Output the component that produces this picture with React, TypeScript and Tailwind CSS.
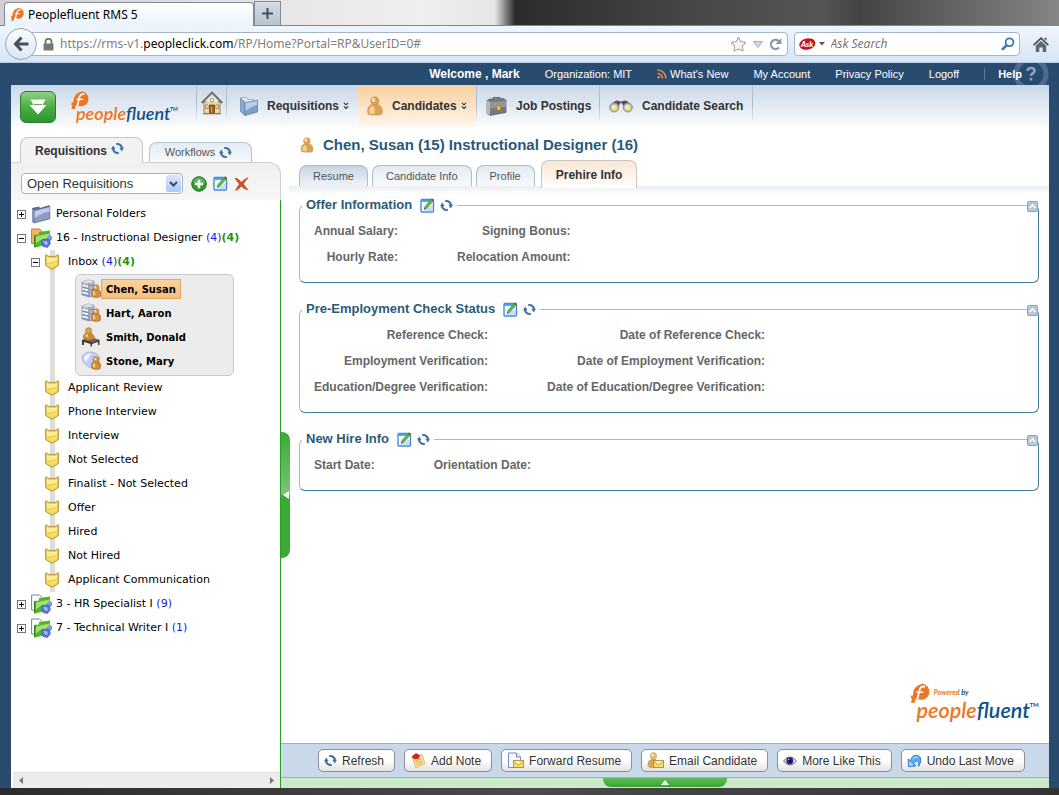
import React, { useState } from 'react';
import { Star } from 'lucide-react';

const arial = "font-['Liberation_Sans',Arial,sans-serif]";
const verdana = "font-['DejaVu_Sans',Verdana,sans-serif]";
const segoe = "font-['Noto_Sans','Segoe_UI',sans-serif]";

/* ---------- icons ---------- */

const RefreshIcon: React.FC = () => (
    <svg width="13" height="13" viewBox="0 0 13 13" fill="none" stroke="#44739f" strokeWidth="2.200" aria-hidden="true">
        <path d="M5.200 2.200A4.500 4.500 0 0 1 11 6.300M7.800 10.800A4.500 4.500 0 0 1 2 6.700" />
        <path d="M8.300 5.800H13l-2.200 3.600zM4.700 7.200H0l2.200-3.600z" fill="#44739f" stroke="none" />
    </svg>
);

const EditIcon: React.FC = () => (
    <svg width="15" height="15" viewBox="0 0 15 15" aria-hidden="true">
        <rect x="1" y="1.500" width="12.500" height="12.500" rx="1" fill="#f4f8ff" stroke="#3a86d0" strokeWidth="1.300" />
        <path d="M1 1.500h12.500v2.400H1z" fill="#4aa3e0" />
        <path d="M2 13.200h11V7z" fill="#cfd8f6" />
        <path d="M4.200 11.300L5 8.600l6-7 2 1.600-6.200 7z" fill="#5cbb46" stroke="#37892b" strokeWidth=".6" />
        <path d="M11 1.600l1-1.100 2.100 1.600-1.100 1.100z" fill="#c43a2c" />
        <path d="M4.200 11.300l.4-1.400 1 .8z" fill="#333" />
    </svg>
);

const AddIcon: React.FC = () => (
    <svg width="16" height="16" viewBox="0 0 16 16" aria-hidden="true">
        <circle cx="8" cy="8" r="7.300" fill="#2f9a2f" stroke="#1f7a24" />
        <path d="M2 7a6 5.400 0 0 1 12 0q-6 2-12 0z" fill="#6cc56a" opacity=".7" />
        <path d="M8 3.800v8.400M3.800 8h8.400" stroke="#fff" strokeWidth="2.600" />
    </svg>
);

const DeleteIcon: React.FC = () => (
    <svg width="15" height="14" viewBox="0 0 15 14" aria-hidden="true">
        <path d="M1 2Q4 1.500 7.300 5 10.500 1.500 14 1M14 12.400Q10.500 11.500 7.400 8 5 10.500 1.500 13.300" fill="none" stroke="none" />
        <path d="M1 1.200Q3.500 1 7.400 5.200 10.500 2 14 .8 11 4 9.300 7q2 3 4.700 5.800-3.600-.3-6.600-3.600Q5 11.800 1.600 13.600 3.200 9.800 5.400 7.200 3.200 4.200 1 1.200z" fill="#d1521f" stroke="#a5381a" strokeWidth=".6" />
    </svg>
);

const PersonIcon: React.FC<{ size?: number }> = ({ size = 20 }) => (
    <svg width={size} height={size} viewBox="0 0 20 20" aria-hidden="true">
        <ellipse cx="10" cy="18" rx="8" ry="1.800" fill="#c9c2b8" opacity=".6" />
        <path d="M2.500 15.500Q2.500 9.500 7.500 8.500h4.500q5.500 1 5.500 7 0 3.700-4.500 3-1.800.9-3.500 0-7 1-7-3z" fill="#dba24e" stroke="#c08c42" strokeWidth=".5" />
        <path d="M4 15q.3-4 4-5.500l2 4-.5 4.500q-5.500.5-5.500-3z" fill="#f3cf92" />
        <circle cx="9.800" cy="5" r="4.200" fill="#dba24e" stroke="#c08c42" strokeWidth=".5" />
        <circle cx="8.600" cy="3.900" r="1.900" fill="#fae3b6" />
    </svg>
);

const FolderIcon: React.FC = () => (
    <svg width="20" height="20" viewBox="0 0 20 20" aria-hidden="true">
        <path d="M1 4l7-1.500 1 1.500 9.500-3v14L2 19z" fill="#5c6c98" />
        <path d="M1 5l2 1v13l-2-1z" fill="#8f9cc0" />
        <path d="M3.200 6.500l15.600-4v12.200L3.200 19z" fill="#8e9cc4" stroke="#5b6a93" strokeWidth=".7" />
        <path d="M3.600 7l14.800-3.800v4.600Q10 9 3.600 14z" fill="#c3cce4" />
    </svg>
);

const BlueFolderIcon: React.FC = () => (
    <svg width="20" height="20" viewBox="0 0 20 20" aria-hidden="true">
        <path d="M2.500 1.500h5l1 2h6V16h-12z" fill="#e9f0f8" stroke="#8aa0bd" strokeWidth=".8" />
        <path d="M1.500 2L6 6v13.500l-4.500-4z" fill="#8ba9cc" stroke="#5b7ba3" strokeWidth=".6" />
        <path d="M6 6.500l12.500-2.200V16L6 19.500z" fill="#7f9fc6" stroke="#5b7ba3" strokeWidth=".7" />
        <path d="M6.500 7l11.500-2v4q-6 1-11.500 6z" fill="#b9cee6" />
    </svg>
);

const ReqFolderIcon: React.FC<{ open?: boolean }> = ({ open }) => (
    <svg width="21" height="20" viewBox="0 0 21 20" aria-hidden="true">
        {open
            ? <path d="M.6 1h8l3 3v11.500H.6z" fill="#f5b567" stroke="#cc7a2a" />
            : <path d="M.6 1h8l3 3v12H.6z" fill="#fff" stroke="#6d83b8" />}
        <path d="M3 7l5-.5V4l11-1.500V16L4 19.500z" fill="#54b428" />
        <path d="M5 8.500l13.500-3V11Q10 10 4.500 16z" fill="#a4e070" />
        <path d="M3 7v12.500l1.500-.5V8z" fill="#2f8a1a" />
        <path d="M19.500 7.500l-4.500 4q-5-1-4.500 2l1.500 5 4.500 1 3-4-1-2.500 2.500-2.500z" fill="#5577d6" stroke="#3550a8" strokeWidth=".6" />
        <path d="M12 13.500l3.500-.5 1.500 2.500-2 1.800z" fill="#a6bcff" />
        <circle cx="18.800" cy="9.600" r="2" fill="#7f9bea" />
    </svg>
);

const ShieldIcon: React.FC = () => (
    <svg width="14" height="16" viewBox="0 0 14 16" aria-hidden="true">
        <path d="M.6.800L4 2.400h6L13.400.800v10.700L7 15.400.600 11.500z" fill="#efcf4c" stroke="#b89a3c" />
        <path d="M2 2.800L4 4h6l2-1v3.500L2 9z" fill="#fbeb9c" />
        <path d="M2 11l10-3.500v3L7 13.800z" fill="#f6df6d" />
    </svg>
);

const MiniPerson: React.FC = () => (
    <g>
        <path d="M10.500 15q0-4.500 3-4.500h3q3.300.5 3.300 5 0 3-3 2.700-1.500.8-3 0-3.300.3-3.300-3.200z" fill="#d2913a" stroke="#94601c" strokeWidth=".6" />
        <circle cx="15" cy="8.600" r="2.900" fill="#dba04c" stroke="#94601c" strokeWidth=".6" />
        <path d="M11.800 15q.2-2.800 2-3.300l.5 4.500q-2.500.5-2.500-1.200z" fill="#f7d596" />
        <circle cx="14.200" cy="7.800" r="1.100" fill="#fae0ac" />
    </g>
);

type CandidateKind = 'database' | 'desk' | 'web';

const CandidateIcon: React.FC<{ kind: CandidateKind }> = ({ kind }) => (
    <svg width="20" height="20" viewBox="0 0 20 20" aria-hidden="true" className="shrink-0">
        {kind === 'database' && (
            <g>
                <path d="M1 3l6-2 6 1v15l-5 1-7-2z" fill="#b4bccd" stroke="#858da0" strokeWidth=".7" />
                <path d="M1 3l6-2 6 1-5 2z" fill="#e3e6ee" />
                <path d="M1.500 6.500l6 1.500M1.500 10l6 1.500M1.500 13.500l6 1.500" stroke="#fff" strokeWidth="1.400" />
                <path d="M1.500 8l6 1.500M1.500 11.500l6 1.500M1.500 15l6 1.500M9 7l4-1M9 11l4-1" stroke="#6d80b2" />
                <path d="M8 4v14" stroke="#78829b" />
                <MiniPerson />
            </g>
        )}
        {kind === 'desk' && (
            <g>
                <path d="M1 13l8-3 9.500 3v5h-1.500v-3l-6 2v2.500H9.500V17L3 15v3H1z" fill="#453c38" />
                <path d="M1.500 12.500l7-2.500 9.500 3-6 2.500z" fill="#71635a" />
                <path d="M2.500 9q1-3 4-3.500h3q2.500 1 4.500 6.500l-6 1.500Q2 13 2.500 9z" fill="#cd8b34" stroke="#8f5c1c" strokeWidth=".6" />
                <circle cx="7.500" cy="3.700" r="3" fill="#dfa550" stroke="#8f5c1c" strokeWidth=".6" />
                <path d="M4 9q.5-2 2.500-2.500l1 4z" fill="#f5cf8c" />
            </g>
        )}
        {kind === 'web' && (
            <g>
                <path d="M1 6q3-5.500 9-5 7 .5 8.500 6 0 6-5 9.500-6 1.500-10-4Q.5 9 1 6z" fill="#c4cbf7" stroke="#a3a9dc" strokeWidth=".7" />
                <path d="M3 6q3-4 7-3.500L5 11Q2.500 9 3 6z" fill="#f3f5ff" />
                <MiniPerson />
            </g>
        )}
    </svg>
);

const HouseIcon: React.FC = () => (
    <svg width="22" height="24" viewBox="0 0 22 24" aria-hidden="true">
        <path d="M3 11h16v11.500H3z" fill="#f1d9a4" stroke="#8b6f45" strokeWidth=".8" />
        <path d="M5 11.500L11 5l6 6.500z" fill="#fbf0d2" />
        <path d="M.7 12L11 1.500 21.300 12" fill="none" stroke="#6d6a69" strokeWidth="1.800" />
        <circle cx="11" cy="9" r="1.800" fill="#fff" stroke="#907445" strokeWidth=".8" />
        <path d="M8.500 14h5v8.500h-5z" fill="#9c6424" stroke="#6c4316" strokeWidth=".8" />
        <path d="M4.500 14h2.500v3.500H4.500zM15 14h2.500v3.500H15z" fill="#fff" stroke="#8b6f45" strokeWidth=".8" />
        <path d="M2 22.800h18" stroke="#87705a" />
        <path d="M10.500 16v5" stroke="#e2ab5c" />
    </svg>
);

const BriefcaseIcon: React.FC = () => (
    <svg width="21" height="20" viewBox="0 0 21 20" aria-hidden="true">
        <path d="M7.500 3.500V1.500h6v2" fill="none" stroke="#666" strokeWidth="1.200" />
        <path d="M1 4.500L3.500 3 18 2.500l2 2v12L4 19.500l-3-2z" fill="#77787a" stroke="#5d5e60" strokeWidth=".7" />
        <path d="M1 4.500l3 1.500v13.500l-3-2z" fill="#b5b7b9" />
        <path d="M4 6l16-1v6L4 12.500z" fill="#929496" />
        <rect x="11" y="10" width="3.500" height="4" rx=".8" fill="#f2cf35" stroke="#a5862a" strokeWidth=".7" />
    </svg>
);

const BinocularsIcon: React.FC = () => (
    <svg width="24" height="14" viewBox="0 0 24 14" aria-hidden="true">
        <path d="M3 5Q5 1.500 9 1.500l2 1h2l2-1q4.500 0 6 4l-6 2-2.500-3.500h-1L9 8z" fill="#66485a" />
        <circle cx="5.200" cy="8.500" r="4.500" fill="#b4c0b2" stroke="#7c868c" strokeWidth=".9" />
        <circle cx="18.800" cy="8.500" r="4.500" fill="#b4c0b2" stroke="#7c868c" strokeWidth=".9" />
        <circle cx="5.200" cy="8.700" r="2.900" fill="#f1e36c" />
        <circle cx="18.800" cy="8.700" r="2.900" fill="#f1e36c" />
        <circle cx="4.500" cy="7.800" r="1.200" fill="#fff" />
        <circle cx="18" cy="7.800" r="1.200" fill="#fff" />
    </svg>
);

const Chevrons: React.FC = () => (
    <svg width="6" height="8" viewBox="0 0 7 9" fill="none" stroke="#333" strokeWidth="1.300" aria-hidden="true">
        <path d="M1 .8l2.500 2.300L6 .8M1 5l2.500 2.300L6 5" />
    </svg>
);

const FluentMark: React.FC = () => (
    <g>
        <path d="M11.500.600a7.300 7.300 0 1 1-3.500 13.800Q6 13 5.500 15.500L4.800 18H1.500l.8-3.800-1.100-.5.5-2.200 1.600-.2Q3 3 11.500.600z" fill="#ee7623" />
        <path d="M14.500 3.300q-4-1-5 2.700L7.300 15" fill="none" stroke="#fff" strokeWidth="1.700" />
        <path d="M6.500 8.300h6.300" stroke="#fff" strokeWidth="1.400" />
    </g>
);

const Logo: React.FC<{ powered?: boolean }> = ({ powered }) => (
    <svg width={powered ? 132 : 110} height={powered ? 46 : 38} viewBox={powered ? '-2 0 110 38' : '0 0 110 38'} overflow="visible" role="img" aria-label="peoplefluent">
        <g transform={powered ? 'scale(.9)' : undefined}><FluentMark /></g>
        <text x="6" y="29" fontFamily="Lato, sans-serif" fontStyle="italic" fontWeight="600" fontSize="18">
            <tspan fill="#ee7623">people</tspan>
            <tspan fill="#0f4f8b">fluent</tspan>
        </text>
        <text x="100" y="20" fontFamily="Lato, sans-serif" fontWeight="700" fontSize="5" fill="#0f4f8b">TM</text>
        {powered && (
            <text x="20" y="10" fontFamily="Lato, sans-serif" fontStyle="italic" fontWeight="700" fontSize="6">
                <tspan fill="#ee7623">Powered </tspan>
                <tspan fill="#0f4f8b">by</tspan>
            </text>
        )}
    </svg>
);

const NoteIcon: React.FC = () => (
    <svg width="16" height="16" viewBox="0 0 16 16" aria-hidden="true">
        <path d="M2 4l10-2.500 3 9L6 15z" fill="#fbe698" stroke="#d0b05c" strokeWidth=".8" />
        <path d="M5 8l6.500-2M5.800 10l6.500-2M6.500 12l6-2" stroke="#c6a152" strokeWidth=".8" />
        <path d="M2 3.500L6 .5l3.500 2-1 3-4 .5z" fill="#d8251c" stroke="#961410" strokeWidth=".6" />
    </svg>
);

const Envelope: React.FC = () => (
    <g>
        <rect x="6.500" y="8.500" width="10" height="7" fill="#f7dc68" stroke="#b18f28" strokeWidth=".9" />
        <path d="M6.500 9l5 4 5-4" fill="#fff3b5" stroke="#b18f28" strokeWidth=".8" />
    </g>
);

const ForwardIcon: React.FC = () => (
    <svg width="17" height="17" viewBox="0 0 17 17" aria-hidden="true">
        <path d="M1.500 1h8l4 4v10.500h-12z" fill="#f5f9ff" stroke="#7390c0" />
        <path d="M9.500 1v4h4" fill="#dde8fa" stroke="#7390c0" />
        <Envelope />
    </svg>
);

const EmailIcon: React.FC = () => (
    <svg width="17" height="17" viewBox="0 0 17 17" aria-hidden="true">
        <path d="M.8 13Q1 8 5 7h3q3 1 3 6 0 3-5 2.600-5 .5-5.200-2.600z" fill="#dba45c" stroke="#c08c4c" strokeWidth=".5" />
        <circle cx="6.500" cy="3.800" r="3.200" fill="#e8bd80" stroke="#c08c4c" strokeWidth=".5" />
        <circle cx="5.700" cy="3" r="1.300" fill="#fbe3c0" />
        <Envelope />
    </svg>
);

const EyeIcon: React.FC = () => (
    <svg width="14" height="10" viewBox="0 0 14 10" aria-hidden="true">
        <path d="M.5 5Q3.500 1 7 1t6.500 4Q10 9 7 9T.5 5z" fill="#e9e9f2" stroke="#555" strokeWidth=".9" />
        <circle cx="6.800" cy="4.800" r="3.500" fill="#23258a" />
        <circle cx="6.800" cy="4.800" r="1.500" fill="#050520" />
        <circle cx="5.700" cy="3.600" r=".8" fill="#c5ccff" />
    </svg>
);

const UndoIcon: React.FC = () => (
    <svg width="15" height="14" viewBox="0 0 15 14" aria-hidden="true">
        <path d="M1 5l.6 7.800L9 12 6.800 9.600Q8.500 6.500 10.800 7q1.600 1.500.7 5.500Q15 8 13.400 3.500 11 0 7 1.500 4.500 2.800 3.500 6.500z" fill="#5aa9ea" stroke="#2a72ba" strokeWidth=".8" />
        <path d="M2 7l.5 4.800 4-.5z" fill="#b6defc" />
        <path d="M5.500 5.500Q7.500 2 11 3" fill="none" stroke="#c7e6fd" />
    </svg>
);

/* ---------- browser chrome ---------- */

const BrowserChrome: React.FC = () => (
    <div className={`${segoe} shrink-0`}>
        <div className="flex h-[26px] items-end border-b border-[#7f8790] bg-[linear-gradient(90deg,#d8cdd0_0,#e9e6e8_290px,#efefef_420px,#e6e6e6_495px,#2c2c2c_515px,#484848_700px,#555_820px,#444_860px,#5c5c5c_930px,#858585_100%)] pl-1">
            <div className="-mb-px flex h-6 w-[250px] items-center gap-1 rounded-t-sm border border-b-0 border-[#7c8a99] bg-gradient-to-b from-white to-[#eaf2fb] pl-[5px] text-[12px] text-black">
                <svg width="14" height="15" viewBox="0 0 19 19" aria-hidden="true"><FluentMark /></svg>
                <span>Peoplefluent RMS 5</span>
            </div>
            <button aria-label="New tab" className="flex h-6 w-[27px] items-center justify-center border border-b-0 border-[#7c8a99] bg-gradient-to-b from-[#d3dce6] to-[#b6c3d1]">
                <svg width="11" height="11" viewBox="0 0 11 11"><path d="M5.500 0v11M0 5.500h11" stroke="#4a4f57" strokeWidth="2" /></svg>
            </button>
        </div>
        <div className="flex h-[37px] items-center border-b border-[#b7c9de] bg-gradient-to-b from-[#f0f6fd] to-[#d7e5f5] pr-[10px] pl-[5px]">
            <button aria-label="Back" className="z-10 -mr-[15px] flex size-8 shrink-0 items-center justify-center rounded-full border border-[#94a3ba] bg-gradient-to-b from-[#fbfdff] to-[#dce7f4]">
                <svg width="16" height="16" viewBox="0 0 16 16" fill="none" stroke="#47505d" strokeWidth="3"><path d="M15.500 8H3M8.500 1.500L2.500 8l6 6.500" /></svg>
            </button>
            <div className="flex h-6 grow items-center rounded-sm border border-[#a6b4c8] bg-white pr-[5px] pl-5">
                <svg width="11" height="13" viewBox="0 0 11 13" className="mr-[6px] shrink-0" aria-hidden="true">
                    <path d="M2.500 6V3.800a3 3 0 0 1 6 0V6" fill="none" stroke="#777" strokeWidth="1.800" />
                    <rect x=".5" y="5.500" width="10" height="7" rx="1" fill="#777" />
                </svg>
                <div className="grow text-[12px] text-[#808080]">
                    https://rms-v1.<span className="text-black">peopleclick.com</span>/RP/Home?Portal=RP&amp;UserID=0#
                </div>
                <Star size={17} fill="#f4f4f4" stroke="#a5a5a5" strokeWidth={1.5} />
                <svg width="10" height="7" viewBox="0 0 10 7" className="mx-[6px]" aria-hidden="true"><path d="M.5.5h9L5 6.500z" fill="#d5dae1" stroke="#a8b0bb" /></svg>
                <svg width="13" height="13" viewBox="0 0 13 13" aria-hidden="true">
                    <path d="M10 9.600A4.600 4.600 0 1 1 9.500 3" fill="none" stroke="#8794a4" strokeWidth="2.200" />
                    <path d="M12.300 0v6H6.500z" fill="#8794a4" />
                </svg>
            </div>
            <div className="ml-[6px] flex h-6 w-[226px] shrink-0 items-center rounded-sm border border-[#a6b4c8] bg-white px-1">
                <svg width="17" height="14" viewBox="0 0 17 14" aria-hidden="true">
                    <ellipse cx="8.500" cy="7" rx="8.300" ry="5.800" fill="#c0181c" transform="rotate(-12 8.500 7)" />
                    <text x="2" y="10" fontFamily="Lato, sans-serif" fontSize="8" fontWeight="900" fontStyle="italic" fill="#fff">Ask</text>
                </svg>
                <svg width="6" height="4" viewBox="0 0 6 4" className="mr-[6px] ml-[3px]" aria-hidden="true"><path d="M0 0h6L3 3.500z" fill="#555" /></svg>
                <input aria-label="Search" placeholder="Ask Search" className="min-w-0 grow bg-transparent text-[12px] italic outline-none placeholder:text-[#777]" />
                <svg width="14" height="14" viewBox="0 0 14 14" fill="none" stroke="#3977ae" aria-hidden="true"><circle cx="8.700" cy="5.200" r="4" strokeWidth="1.800" /><path d="M5.700 8.300L1 13" strokeWidth="2.600" /></svg>
            </div>
            <svg width="16" height="15" viewBox="0 0 16 15" className="ml-[13px] shrink-0" aria-hidden="true">
                <path d="M8 0l8 7.500-1.200 1.200L8 2.500 1.200 8.700 0 7.500zM11.500 0.800h2v3l-2-1.800z" fill="#49525e" />
                <path d="M2.800 8.500L8 4l5.200 4.500V15H9.700v-4.500H6.300V15H2.800z" fill="#5d6875" />
            </svg>
        </div>
    </div>
);

/* ---------- header ---------- */

const TopLinks: React.FC = () => (
    <div className="relative flex h-[22px] shrink-0 items-center justify-end gap-[25px] overflow-hidden pr-[27px] text-[11px] text-white">
        <svg width="36" height="36" viewBox="0 0 36 36" className="absolute top-[-7px] right-0" aria-hidden="true">
            <circle cx="18" cy="18" r="15" fill="none" stroke="#4f6b8b" strokeWidth="5" />
            <path d="M14.500 15q0-3 3.500-3t3.500 2.700q0 1.800-2 2.800-1.500.8-1.500 2.500M18 22v2.500" fill="none" stroke="#8da2ba" strokeWidth="2.600" />
        </svg>
        <span className="text-[12px] font-bold">Welcome , Mark</span>
        <span>Organization: MIT</span>
        <a href="#new" className="flex items-center gap-[3px]">
            <svg width="10" height="10" viewBox="0 0 10 10" fill="none" stroke="#e2914c" strokeWidth="1.600" aria-hidden="true">
                <path d="M.5 1A8.500 8.500 0 0 1 9 9.500M.5 4.500a5 5 0 0 1 5 5" /><circle cx="1.700" cy="8.300" r="1.300" fill="#e2914c" stroke="none" />
            </svg>
            What's New
        </a>
        <a href="#account">My Account</a>
        <a href="#privacy">Privacy Policy</a>
        <a href="#logoff">Logoff</a>
        <a href="#help" className="relative flex items-center gap-[13px] font-bold before:h-3 before:w-px before:bg-[#5f7b9b]">Help</a>
    </div>
);

const divider = 'h-9 w-px shrink-0 bg-gradient-to-b from-[#b9c8d8] via-[#a9b8c8] to-[#e8eef4]';

const MainNav: React.FC = () => (
    <nav className="flex h-[45px] shrink-0 items-start bg-gradient-to-b from-[#c9d8e8] via-[#e3ebf3] via-50% to-white pl-[9px] text-[12px] font-bold text-[#333]">
        <button aria-label="Actions" className="mt-[6px] flex h-8 w-9 items-center justify-center rounded-md border border-[#2e7d2e] bg-gradient-to-b from-[#8fd185] via-[#4aae44] to-[#2c9630]">
            <svg width="18" height="18" viewBox="0 0 18 18" fill="#fff" aria-hidden="true"><path d="M1.500 1.500h15L13.500 7h4L9 16.500.500 7h4z" /><path d="M5 6.500h8" stroke="#5db458" /></svg>
        </button>
        <a href="#home" className="mt-[6px] ml-[14px] flex w-[126px]"><Logo /></a>
        <span className={divider} />
        <a href="#start" aria-label="Home" className="flex h-9 w-[29px] items-center justify-center"><HouseIcon /></a>
        <span className={divider} />
        <a href="#requisitions" className="flex h-[41px] w-[131px] items-center pl-3">
            <BlueFolderIcon /><span className="mr-1 ml-2">Requisitions</span><Chevrons />
        </a>
        <a href="#candidates" className="flex h-[41px] w-[118px] items-center bg-gradient-to-b from-[#f6cf9f] to-[#fff6ea] pl-[7px]">
            <PersonIcon /><span className="mr-1 ml-[7px]">Candidates</span><Chevrons />
        </a>
        <span className={divider} />
        <a href="#postings" className="flex h-[41px] w-[122px] items-center pl-[9px]">
            <BriefcaseIcon /><span className="ml-[9px]">Job Postings</span>
        </a>
        <span className={divider} />
        <a href="#search" className="flex h-[41px] w-[152px] items-center pl-[9px]">
            <BinocularsIcon /><span className="ml-[9px]">Candidate Search</span>
        </a>
        <span className={divider} />
    </nav>
);

/* ---------- sidebar ---------- */

const candidates: { name: string; kind: CandidateKind }[] = [
    { name: 'Chen, Susan', kind: 'database' },
    { name: 'Hart, Aaron', kind: 'database' },
    { name: 'Smith, Donald', kind: 'desk' },
    { name: 'Stone, Mary', kind: 'web' },
];

const stages = [
    'Applicant Review', 'Phone Interview', 'Interview', 'Not Selected',
    'Finalist - Not Selected', 'Offer', 'Hired', 'Not Hired', 'Applicant Communication',
];

const Toggle: React.FC<{ open?: boolean; label: string }> = ({ open, label }) => (
    <button aria-label={label} aria-expanded={!!open} className="flex size-[9px] shrink-0 items-center justify-center border border-[#777] bg-white">
        <svg width="5" height="5" viewBox="0 0 5 5" stroke="#000"><path d={open ? 'M0 2.500h5' : 'M0 2.500h5M2.500 0v5'} /></svg>
    </button>
);

const Row: React.FC<{ children: React.ReactNode; indent?: string }> = ({ children, indent = 'pl-[6px]' }) => (
    <div className={`relative flex h-6 items-center ${indent}`}>{children}</div>
);

const Sidebar: React.FC = () => {
    const [selected, setSelected] = useState('Chen, Susan');

    return (
        <aside className="flex w-[270px] shrink-0 flex-col">
            <div className="flex h-8 items-end gap-[6px] pl-[9px]">
                <button className="z-10 -mb-px flex h-[26px] w-[123px] items-center justify-center gap-1 rounded-t-lg border border-b-0 border-[#c6c6c6] bg-[#f2f2f2] pr-1 text-[12px] font-bold text-[#333]">
                    Requisitions <span className="pb-1"><RefreshIcon /></span>
                </button>
                <button className="flex h-5 w-[103px] items-center justify-center gap-1 rounded-t-lg border border-b-0 border-[#b4c6d6] bg-gradient-to-b from-[#e3edf5] to-[#f6f9fc] pr-1 text-[11px] text-[#555]">
                    Workflows <RefreshIcon />
                </button>
            </div>
            <div className="flex h-[38px] items-center rounded-tr-xl border-t border-r border-[#cfcfcf] bg-gradient-to-b from-[#f0f0f0] to-[#f7f7f7] pt-1 pl-[10px]">
                <div className="relative mr-2">
                    <select aria-label="Requisition filter" className="block h-[21px] w-[162px] appearance-none rounded-sm border border-[#9db4cf] bg-white pl-[5px] text-[13px] text-[#333]">
                        <option>Open Requisitions</option>
                    </select>
                    <span className="pointer-events-none absolute top-[2px] right-[2px] flex h-[17px] w-[15px] items-center justify-center rounded-xs bg-gradient-to-b from-[#dbe6fc] to-[#b3c8f2]">
                        <svg width="9" height="6" viewBox="0 0 9 6" fill="none" stroke="#2f4a74" strokeWidth="2"><path d="M1 1l3.500 3.500L8 1" /></svg>
                    </span>
                </div>
                <div className="flex items-center gap-[6px]">
                    <button aria-label="Add"><AddIcon /></button>
                    <button aria-label="Edit"><EditIcon /></button>
                    <button aria-label="Delete"><DeleteIcon /></button>
                </div>
            </div>
            <div className={`${verdana} flex grow flex-col border-r border-[#22a022] text-[11px] text-black`}>
                <div className="grow pt-[2px]">
                    <Row><Toggle label="Expand Personal Folders" /><span className="mr-[5px] ml-[5px]"><FolderIcon /></span>Personal Folders</Row>
                    <Row>
                        <Toggle open label="Collapse Instructional Designer" /><span className="mr-1 ml-[5px]"><ReqFolderIcon open /></span>
                        16 - Instructional Designer&nbsp;<span className="text-[#1a1ad6]">(4)</span><span className="font-bold text-[#2a9010]">(4)</span>
                    </Row>
                    <div className="relative before:absolute before:inset-y-0 before:left-[39px] before:w-[5px] before:bg-[#e0ddd8]">
                        <Row indent="pl-5">
                            <Toggle open label="Collapse Inbox" /><span className="mr-[9px] ml-[5px]"><ShieldIcon /></span>
                            Inbox&nbsp;<span className="text-[#1a1ad6]">(4)</span><span className="font-bold text-[#2a9010]">(4)</span>
                        </Row>
                        <ul className="ml-16 w-[159px] rounded-md border border-[#c9c9c9] bg-[#ececec] py-[2px] pl-[5px]">
                            {candidates.map(c => (
                                <li key={c.name} className="flex h-6 items-center">
                                    <CandidateIcon kind={c.kind} />
                                    <button
                                        onClick={() => setSelected(c.name)}
                                        className={`flex h-5 items-center border px-1 text-[10px] font-bold ${selected === c.name ? 'border-[#e5aa62] bg-gradient-to-b from-[#fbd3a0] to-[#f2bf80]' : 'border-transparent'}`}
                                    >
                                        {c.name}
                                    </button>
                                </li>
                            ))}
                        </ul>
                        {stages.map(s => (
                            <Row key={s} indent="pl-[34px]"><span className="mr-[9px]"><ShieldIcon /></span>{s}</Row>
                        ))}
                    </div>
                    <Row><Toggle label="Expand HR Specialist" /><span className="mr-1 ml-[5px]"><ReqFolderIcon /></span>3 - HR Specialist I&nbsp;<span className="text-[#1a1ad6]">(9)</span></Row>
                    <Row><Toggle label="Expand Technical Writer" /><span className="mr-1 ml-[5px]"><ReqFolderIcon /></span>7 - Technical Writer I&nbsp;<span className="text-[#1a1ad6]">(1)</span></Row>
                </div>
                <div className="ml-[2px] flex h-4 items-center justify-between border-t border-[#e0e0e0] bg-[#ececec] px-[6px]">
                    <svg width="4" height="7" viewBox="0 0 4 7"><path d="M4 0v7L0 3.500z" fill="#777" /></svg>
                    <svg width="4" height="7" viewBox="0 0 4 7"><path d="M0 0v7l4-3.500z" fill="#777" /></svg>
                </div>
            </div>
        </aside>
    );
};

/* ---------- candidate detail ---------- */

const tabs = ['Resume', 'Candidate Info', 'Profile'];

const sections: { title: string; rows: string[][] }[] = [
    { title: 'Offer Information', rows: [['Annual Salary:', 'Signing Bonus:'], ['Hourly Rate:', 'Relocation Amount:']] },
    {
        title: 'Pre-Employment Check Status',
        rows: [
            ['Reference Check:', 'Date of Reference Check:'],
            ['Employment Verification:', 'Date of Employment Verification:'],
            ['Education/Degree Verification:', 'Date of Education/Degree Verification:'],
        ],
    },
    { title: 'New Hire Info', rows: [['Start Date:', 'Orientation Date:']] },
];

const Section: React.FC<{ title: string; rows: string[][] }> = ({ title, rows }) => (
    <fieldset className="relative rounded-md border border-t-[#a3bcc9] border-r-[#467f9c] border-b-[#467f9c] border-l-[#a3bcc9] pb-3">
        <legend className="ml-[2px] flex h-5 items-center px-1 text-[13px] font-bold text-[#2c5b77]">
            {title}
            <button aria-label={`Edit ${title}`} className="ml-2"><EditIcon /></button>
            <button aria-label={`Refresh ${title}`} className="ml-[5px]"><RefreshIcon /></button>
        </legend>
        <button aria-label={`Collapse ${title}`} className="absolute top-[-14px] right-0 flex size-[11px] items-center justify-center rounded-xs border border-[#86a5ba] bg-[#b5c9da]">
            <svg width="7" height="5" viewBox="0 0 7 5" fill="none" stroke="#fff" strokeWidth="1.500"><path d="M.5 4l3-3 3 3" /></svg>
        </button>
        <dl className="grid auto-rows-[26px] grid-cols-[max-content_59px_max-content_1fr] items-center pt-[3px] pl-[14px] text-right text-[12px] font-bold text-[#666]">
            {rows.flat().map(label => (
                <React.Fragment key={label}><dt>{label}</dt><dd /></React.Fragment>
            ))}
        </dl>
    </fieldset>
);

const actions: { label: string; icon: React.ReactNode }[] = [
    { label: 'Refresh', icon: <RefreshIcon /> },
    { label: 'Add Note', icon: <NoteIcon /> },
    { label: 'Forward Resume', icon: <ForwardIcon /> },
    { label: 'Email Candidate', icon: <EmailIcon /> },
    { label: 'More Like This', icon: <EyeIcon /> },
    { label: 'Undo Last Move', icon: <UndoIcon /> },
];

const Detail: React.FC = () => (
    <main className="relative flex min-w-0 grow flex-col">
        <button aria-label="Collapse sidebar" className="absolute top-[302px] left-0 flex h-[126px] w-[9px] items-center justify-center rounded-r-lg bg-[linear-gradient(#3aa935,#7cc576_50%,#3aaa35_50%,#3aaa35)]">
            <svg width="6" height="8" viewBox="0 0 6 8"><path d="M6 0v8L0 4z" fill="#fff" /></svg>
        </button>
        <h1 className="flex h-[30px] items-center gap-2 pl-[18px] text-[15px] font-bold text-[#28597a]">
            <PersonIcon size={16} />
            Chen, Susan (15) Instructional Designer (16)
        </h1>
        <div className="flex h-[26px] items-end gap-1 pl-[18px] text-[11px] text-[#555]">
            {tabs.map((t, i) => (
                <button key={t} className={`h-[21px] rounded-t-lg border border-b-0 border-[#a9bdcd] bg-gradient-to-b px-[13px] ${i === 0 ? 'from-[#c6d5e3] to-[#eff4f8]' : 'from-[#e2ebf2] to-[#f8fafc]'}`}>
                    {t}
                </button>
            ))}
            <button className="z-10 -mb-[2px] ml-[2px] h-7 rounded-t-lg border border-b-0 border-[#c9c3bf] bg-gradient-to-b from-[#fbe6d4] to-white px-[14px] text-[12px] font-bold text-[#333]">Prehire Info</button>
        </div>
        <div className="ml-2 grow bg-[linear-gradient(#e9edf2,#fff_8px)] pt-[9px] pr-[10px] pl-[10px]">
            <div className="flex h-full flex-col">
                <div className="flex flex-col gap-4">
                    {sections.map(s => <Section key={s.title} {...s} />)}
                </div>
                <div className="mt-auto flex justify-end pb-[14px]"><Logo powered /></div>
            </div>
        </div>
        <div className="flex h-[35px] shrink-0 items-center gap-[9px] border-y border-[#9db0c9] bg-[#c9d9e9] pl-[37px]">
            {actions.map(a => (
                <button key={a.label} className="flex h-[23px] items-center gap-[5px] rounded-[5px] border border-[#8b8f96] bg-gradient-to-b from-white via-white to-[#e2e2e2] pr-[10px] pl-[5px] text-[12px] whitespace-nowrap text-[#333]">
                    {a.icon}{a.label}
                </button>
            ))}
        </div>
        <div className="flex h-[10px] shrink-0 justify-center bg-[#cce9cc]">
            <button aria-label="Show drawer" className="flex h-[9px] w-[124px] items-center justify-center rounded-b-lg bg-gradient-to-b from-[#5fbd58] to-[#35a531]">
                <svg width="8" height="5" viewBox="0 0 8 5"><path d="M4 0l4 5H0z" fill="#fff" /></svg>
            </button>
        </div>
    </main>
);

const App: React.FC = () => (
    <div className={`${arial} flex min-h-screen flex-col bg-[#3a3a3a]`}>
        <BrowserChrome />
        <div className="flex grow flex-col bg-[#294b70] pr-[10px] pl-[11px]">
            <TopLinks />
            <MainNav />
            <div className="flex grow bg-white">
                <Sidebar />
                <Detail />
            </div>
        </div>
        <div className="h-[7px] shrink-0 bg-gradient-to-r from-[#2c2c2c] via-[#4a4a4a] to-[#333]" />
    </div>
);

export default App;
